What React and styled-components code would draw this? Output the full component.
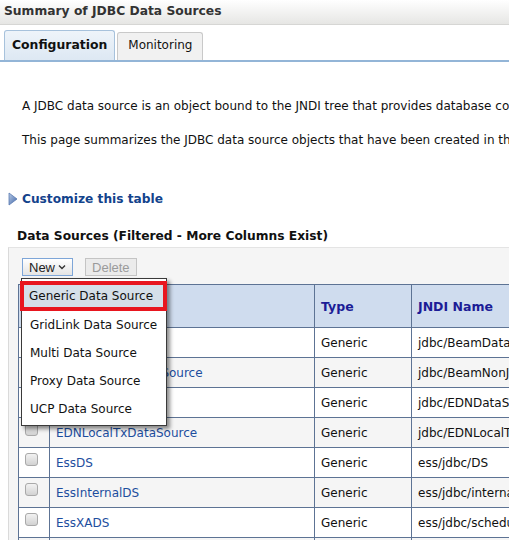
import styled, { createGlobalStyle } from 'styled-components';

const GlobalStyle = createGlobalStyle`
    body {
        margin: 0;
        background: #ffffff;
        font-family: 'DejaVu Sans', Tahoma, sans-serif;
        font-size: 12px;
        color: #111111;
        overflow: hidden;
    }
`;

const rows = [
    { name: 'BeamDataSource', type: 'Generic', jndi: 'jdbc/BeamDataSource' },
    { name: 'BeamNonJTADataSource', type: 'Generic', jndi: 'jdbc/BeamNonJTADataSource' },
    { name: 'EDNDataSource', type: 'Generic', jndi: 'jdbc/EDNDataSource' },
    { name: 'EDNLocalTxDataSource', type: 'Generic', jndi: 'jdbc/EDNLocalTxDataSource' },
    { name: 'EssDS', type: 'Generic', jndi: 'ess/jdbc/DS' },
    { name: 'EssInternalDS', type: 'Generic', jndi: 'ess/jdbc/internalDS' },
    { name: 'EssXADS', type: 'Generic', jndi: 'ess/jdbc/scheduler' },
    { name: 'LocalSvcTblDataSource', type: 'Generic', jndi: 'jdbc/LocalSvcTblDataSource' },
];

const menuItems = [
    'Generic Data Source',
    'GridLink Data Source',
    'Multi Data Source',
    'Proxy Data Source',
    'UCP Data Source',
];

export default function App() {
    return (
        <Page>
            <GlobalStyle />
            <TitleBar>Summary of JDBC Data Sources</TitleBar>
            <TabStrip>
                <Tab $active>Configuration</Tab>
                <Tab>Monitoring</Tab>
            </TabStrip>
            <Intro>
                <p>A JDBC data source is an object bound to the JNDI tree that provides database connectivity through a pool of JDBC connections.</p>
                <p>This page summarizes the JDBC data source objects that have been created in this domain.</p>
            </Intro>
            <Customize>
                <svg width="10" height="14" viewBox="0 0 10 14">
                    <defs>
                        <linearGradient id="tri" x1="0" y1="0" x2="1" y2="1">
                            <stop offset="0" stopColor="#b9cbe6" />
                            <stop offset="1" stopColor="#3f66a8" />
                        </linearGradient>
                    </defs>
                    <path d="M1 1 L9 7 L1 13 Z" fill="url(#tri)" stroke="#5a7bb3" strokeWidth="0.8" />
                </svg>
                <span>Customize this table</span>
            </Customize>
            <SectionTitle>Data Sources (Filtered - More Columns Exist)</SectionTitle>
            <Panel>
                <Toolbar>
                    <ToolButton $open>
                        New
                        <svg width="8" height="6" viewBox="0 0 8 6">
                            <path d="M1 1.5 L4 4.5 L7 1.5" fill="none" stroke="#333" strokeWidth="1.4" />
                        </svg>
                    </ToolButton>
                    <ToolButton $disabled>Delete</ToolButton>
                </Toolbar>
                <Menu>
                    {menuItems.map((item, index) => (
                        <MenuItem key={item} $selected={index === 0}>{item}</MenuItem>
                    ))}
                </Menu>
                <Table>
                    <colgroup>
                        <col style={{ width: 31 }} />
                        <col style={{ width: 265 }} />
                        <col style={{ width: 97 }} />
                        <col style={{ width: 200 }} />
                    </colgroup>
                    <thead>
                        <tr>
                            <HeadCell><CheckBox /></HeadCell>
                            <HeadCell>Name</HeadCell>
                            <HeadCell>Type</HeadCell>
                            <HeadCell>JNDI Name</HeadCell>
                        </tr>
                    </thead>
                    <tbody>
                        {rows.map((row, index) => (
                            <Row key={row.name} $odd={index % 2 === 1}>
                                <Cell $box><CheckBox /></Cell>
                                <Cell><NameLink>{row.name}</NameLink></Cell>
                                <Cell>{row.type}</Cell>
                                <Cell>{row.jndi}</Cell>
                            </Row>
                        ))}
                    </tbody>
                </Table>
            </Panel>
        </Page>
    );
}

const Page = styled.div`
    width: 509px;
    height: 540px;
    overflow: hidden;
`;

const TitleBar = styled.div`
    height: 25px;
    box-sizing: border-box;
    padding: 4px 0 0 4px;
    background: linear-gradient(#ffffff, #e6e6e4);
    border-bottom: 1px solid #d6d6d4;
    font-weight: 700;
    font-size: 12.3px;
    color: #333333;
    white-space: nowrap;
`;

const TabStrip = styled.div`
    display: flex;
    align-items: flex-end;
    gap: 2px;
    height: 37px;
    box-sizing: border-box;
    padding-left: 4px;
    border-bottom: 2px solid #93b5d7;
`;

const Tab = styled.div`
    height: ${(p) => (p.$active ? '30px' : '28px')};
    box-sizing: border-box;
    padding: ${(p) => (p.$active ? '6px 7px 0 7px' : '5px 10px 0 10px')};
    border: 1px solid ${(p) => (p.$active ? '#a7c2dc' : '#c9c9c9')};
    border-bottom: none;
    border-radius: 3px 3px 0 0;
    background: ${(p) => (p.$active ? 'linear-gradient(#eef4fa, #dde8f3)' : '#f1f1f1')};
    font-weight: ${(p) => (p.$active ? 700 : 400)};
    font-size: ${(p) => (p.$active ? '12.4px' : '12px')};
    color: #111111;
`;

const Intro = styled.div`
    padding: 36px 0 0 22px;
    white-space: nowrap;

    p {
        margin: 0 0 18px 0;
        line-height: 16px;
    }

    p:last-child {
        margin-bottom: 0;
    }
`;

const Customize = styled.div`
    display: flex;
    align-items: center;
    gap: 4px;
    margin: 43px 0 0 8px;
    height: 16px;
    font-weight: 700;
    font-size: 12.2px;
    color: #13438c;
`;

const SectionTitle = styled.div`
    margin: 21px 0 0 17px;
    line-height: 16px;
    font-weight: 700;
    font-size: 12.25px;
    color: #111111;
    white-space: nowrap;
`;

const Panel = styled.div`
    position: relative;
    margin: 3px 0 0 8px;
    padding: 10px 0 0 9px;
    background: #f5f5f5;
    border-top: 1px solid #e4e4e4;
    border-left: 1px solid #dadada;
    height: 300px;
`;

const Toolbar = styled.div`
    display: flex;
    gap: 12px;
    margin-left: 4px;
`;

const ToolButton = styled.div`
    display: flex;
    align-items: center;
    gap: 3px;
    height: 18px;
    box-sizing: border-box;
    padding: 0 6px;
    border: 1px solid ${(p) => (p.$open ? '#7ea6d8' : '#c4c4c4')};
    background: ${(p) => (p.$disabled ? '#ebebeb' : 'linear-gradient(#ffffff, #e4e4e4)')};
    color: ${(p) => (p.$disabled ? '#9a9a9a' : '#222222')};
    font-family: 'Liberation Sans', Arial, sans-serif;
    font-size: 13px;
`;

const Menu = styled.div`
    position: absolute;
    left: 12px;
    top: 30px;
    z-index: 2;
    width: 146px;
    box-sizing: border-box;
    padding: 2px 0 2px 0;
    background: #ffffff;
    border: 1px solid #3a3a3a;
    box-shadow: 3px 3px 4px rgba(0, 0, 0, 0.45);
`;

const MenuItem = styled.div`
    height: ${(p) => (p.$selected ? '30px' : '28px')};
    line-height: ${(p) => (p.$selected ? '22px' : '28px')};
    box-sizing: border-box;
    padding-left: ${(p) => (p.$selected ? '5px' : '8px')};
    margin: ${(p) => (p.$selected ? '0 -1px 0 -2px' : '0')};
    border: ${(p) => (p.$selected ? '4px solid #e8161f' : 'none')};
    background: ${(p) => (p.$selected ? '#d5dfe9' : 'transparent')};
    font-size: 12px;
    color: #111111;
    white-space: nowrap;
`;

const Table = styled.table`
    margin-top: 8px;
    border-collapse: collapse;
    table-layout: fixed;
    width: 593px;
`;

const HeadCell = styled.th`
    height: 43px;
    box-sizing: border-box;
    padding: 0 6px;
    background: #cfdcee;
    border: 1px solid #5d7394;
    text-align: left;
    font-weight: 700;
    font-size: 12.5px;
    color: #1c1c96;
`;

const Row = styled.tr`
    background: ${(p) => (p.$odd ? '#f5f5f5' : '#ffffff')};
`;

const Cell = styled.td`
    height: 30px;
    box-sizing: border-box;
    padding: ${(p) => (p.$box ? '0 0 0 6px' : '0 6px')};
    border: 1px solid #5d7394;
    white-space: nowrap;
    overflow: hidden;
    vertical-align: middle;
`;

const NameLink = styled.span`
    color: #1d4e9e;
`;

const CheckBox = styled.span`
    display: block;
    width: 13px;
    height: 13px;
    box-sizing: border-box;
    border: 1px solid #a9a9a9;
    border-radius: 3px;
    background: linear-gradient(#f2f2f2, #d2d2d2);
    margin-top: -6px;
`;
